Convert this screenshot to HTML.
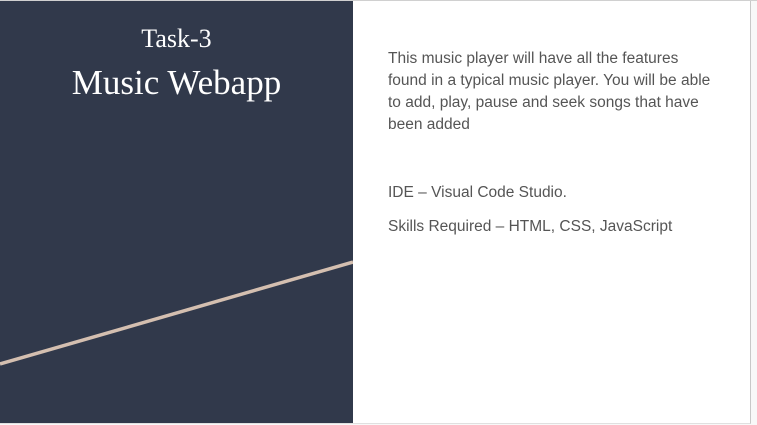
<!DOCTYPE html>
<html><head><style>
body{margin:0;width:757px;height:425px;background:#f8f8f8;position:relative;overflow:hidden}
.slide{position:absolute;left:0;top:1px;width:750px;height:422px;background:#fff;border-right:1px solid #c8c8c8;border-bottom:1px solid #e0e0e0}
.top{position:absolute;left:0;top:0;width:757px;height:1px;background:#d0d0d0}
.dark{position:absolute;left:0;top:0;width:353px;height:422px;background:#31394b}
.t1{position:absolute;left:0;width:353px;text-align:center;color:#fff;font-family:"Liberation Serif",serif}
.r{position:absolute;left:388px;font-family:"Liberation Sans",sans-serif;font-size:15.5px;color:#555;line-height:22px;width:328px}
</style></head><body>
<div class="top"></div>
<div class="slide">
<div class="dark">
<div class="t1" style="top:23px;font-size:26px">Task-3</div>
<div class="t1" style="top:62px;font-size:35px">Music Webapp</div>
<svg width="353" height="422" style="position:absolute;left:0;top:0"><line x1="0" y1="363" x2="353" y2="261" stroke="#d4bfb0" stroke-width="3.5"/></svg>
</div>
<div class="r" style="top:47px">This music player will have all the features found in a typical music player. You will be able to add, play, pause and seek songs that have been added</div>
<div class="r" style="top:181px">IDE – Visual Code Studio.</div>
<div class="r" style="top:215px">Skills Required – HTML, CSS, JavaScript</div>
</div>
</body></html>
